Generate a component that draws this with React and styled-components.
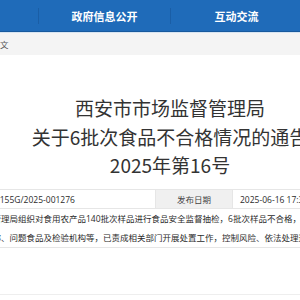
import React from "react";
import styled, { createGlobalStyle } from "styled-components";

const GlobalStyle = createGlobalStyle`
  html, body {
    margin: 0;
    padding: 0;
    background: #fff;
    overflow: hidden;
  }
  body {
    font-family: "Noto Sans CJK SC", "Microsoft YaHei", sans-serif;
  }
`;

const navItems = ["首页", "机构概况", "政府信息公开", "互动交流", "办事服务"];

const App = () => (
  <Page>
    <GlobalStyle />
    <NavBar>
      {navItems.map((item, i) => (
        <NavItem key={item} $first={i === 0} $w={i === 0 ? 86 : 132}>
          {item}
        </NavItem>
      ))}
    </NavBar>
    <Crumbs>
      <span>当前位置：首页＞政府信息公开＞正文</span>
    </Crumbs>
    <Title>
      西安市市场监督管理局
      <br />
      关于6批次食品不合格情况的通告
      <br />
      2025年第16号
    </Title>
    <InfoTable>
      <colgroup>
        <col style={{ width: 100 }} />
        <col style={{ width: 235 }} />
        <col style={{ width: 77 }} />
        <col />
      </colgroup>
      <tbody>
        <tr>
          <Label>索引号</Label>
          <Value $pad={17}>11610100MB29155G/2025-001276</Value>
          <Label>发布日期</Label>
          <Value $pad={7}>2025-06-16 17:30</Value>
        </tr>
        <tr>
          <Label>内容概述</Label>
          <Summary colSpan={3}>
            西安市市场监督管理局组织对食用农产品140批次样品进行食品安全监督抽检，6批次样品不合格，涉及不合格样品的生产经营者
            <br />
            标称生产企业名称、问题食品及检验机构等，已责成相关部门开展处置工作，控制风险、依法处理违法违规行为。
          </Summary>
        </tr>
      </tbody>
    </InfoTable>
    <Divider />
  </Page>
);

const Page = styled.div`
  width: 700px;
  margin-left: -180px;
`;

const NavBar = styled.nav`
  height: 31px;
  display: flex;
  align-items: center;
  background: #1f6bb9;
  border-bottom: 1px solid #17599d;
  box-shadow: 0 1px 0 #d7e4f1;
`;

const NavItem = styled.a`
  flex: 0 0 ${(p) => p.$w}px;
  box-sizing: border-box;
  height: 16px;
  line-height: 16px;
  border-left: ${(p) => (p.$first ? "none" : "1px solid #1a5ea6")};
  text-align: center;
  color: #fff;
  font-size: 11px;
  font-weight: bold;
  text-decoration: none;
`;

const Crumbs = styled.div`
  margin-top: 1px;
  height: 22px;
  display: flex;
  align-items: center;
  padding-left: 44px;
  background: #f4f4f4;
  color: #555;
  font-size: 8.5px;
  white-space: nowrap;
`;

const Title = styled.h1`
  margin: 0;
  padding-top: 39px;
  text-align: center;
  font-size: 19px;
  line-height: 28.5px;
  font-weight: normal;
  color: #333;
`;

const InfoTable = styled.table`
  width: 100%;
  margin-top: 9.5px;
  border-collapse: collapse;
  table-layout: fixed;
  font-family: "Open Sans", "Noto Sans CJK SC", sans-serif;
  font-size: 8.5px;
  color: #2b2b2b;
`;

const Label = styled.td`
  height: 18px;
  padding: 0;
  border: 1px solid #e6e6e6;
  background: #f0f0f0;
  color: #444;
  text-align: center;
  white-space: nowrap;
`;

const Value = styled.td`
  height: 18px;
  padding: 0 0 0 ${(p) => p.$pad || 12}px;
  border: 1px solid #e6e6e6;
  white-space: nowrap;
  overflow: hidden;
`;

const Summary = styled(Value)`
  line-height: 19px;
  height: auto;
`;

const Divider = styled.div`
  height: 1px;
  margin-top: 46px;
  background: #eeeeee;
`;

export default App;
